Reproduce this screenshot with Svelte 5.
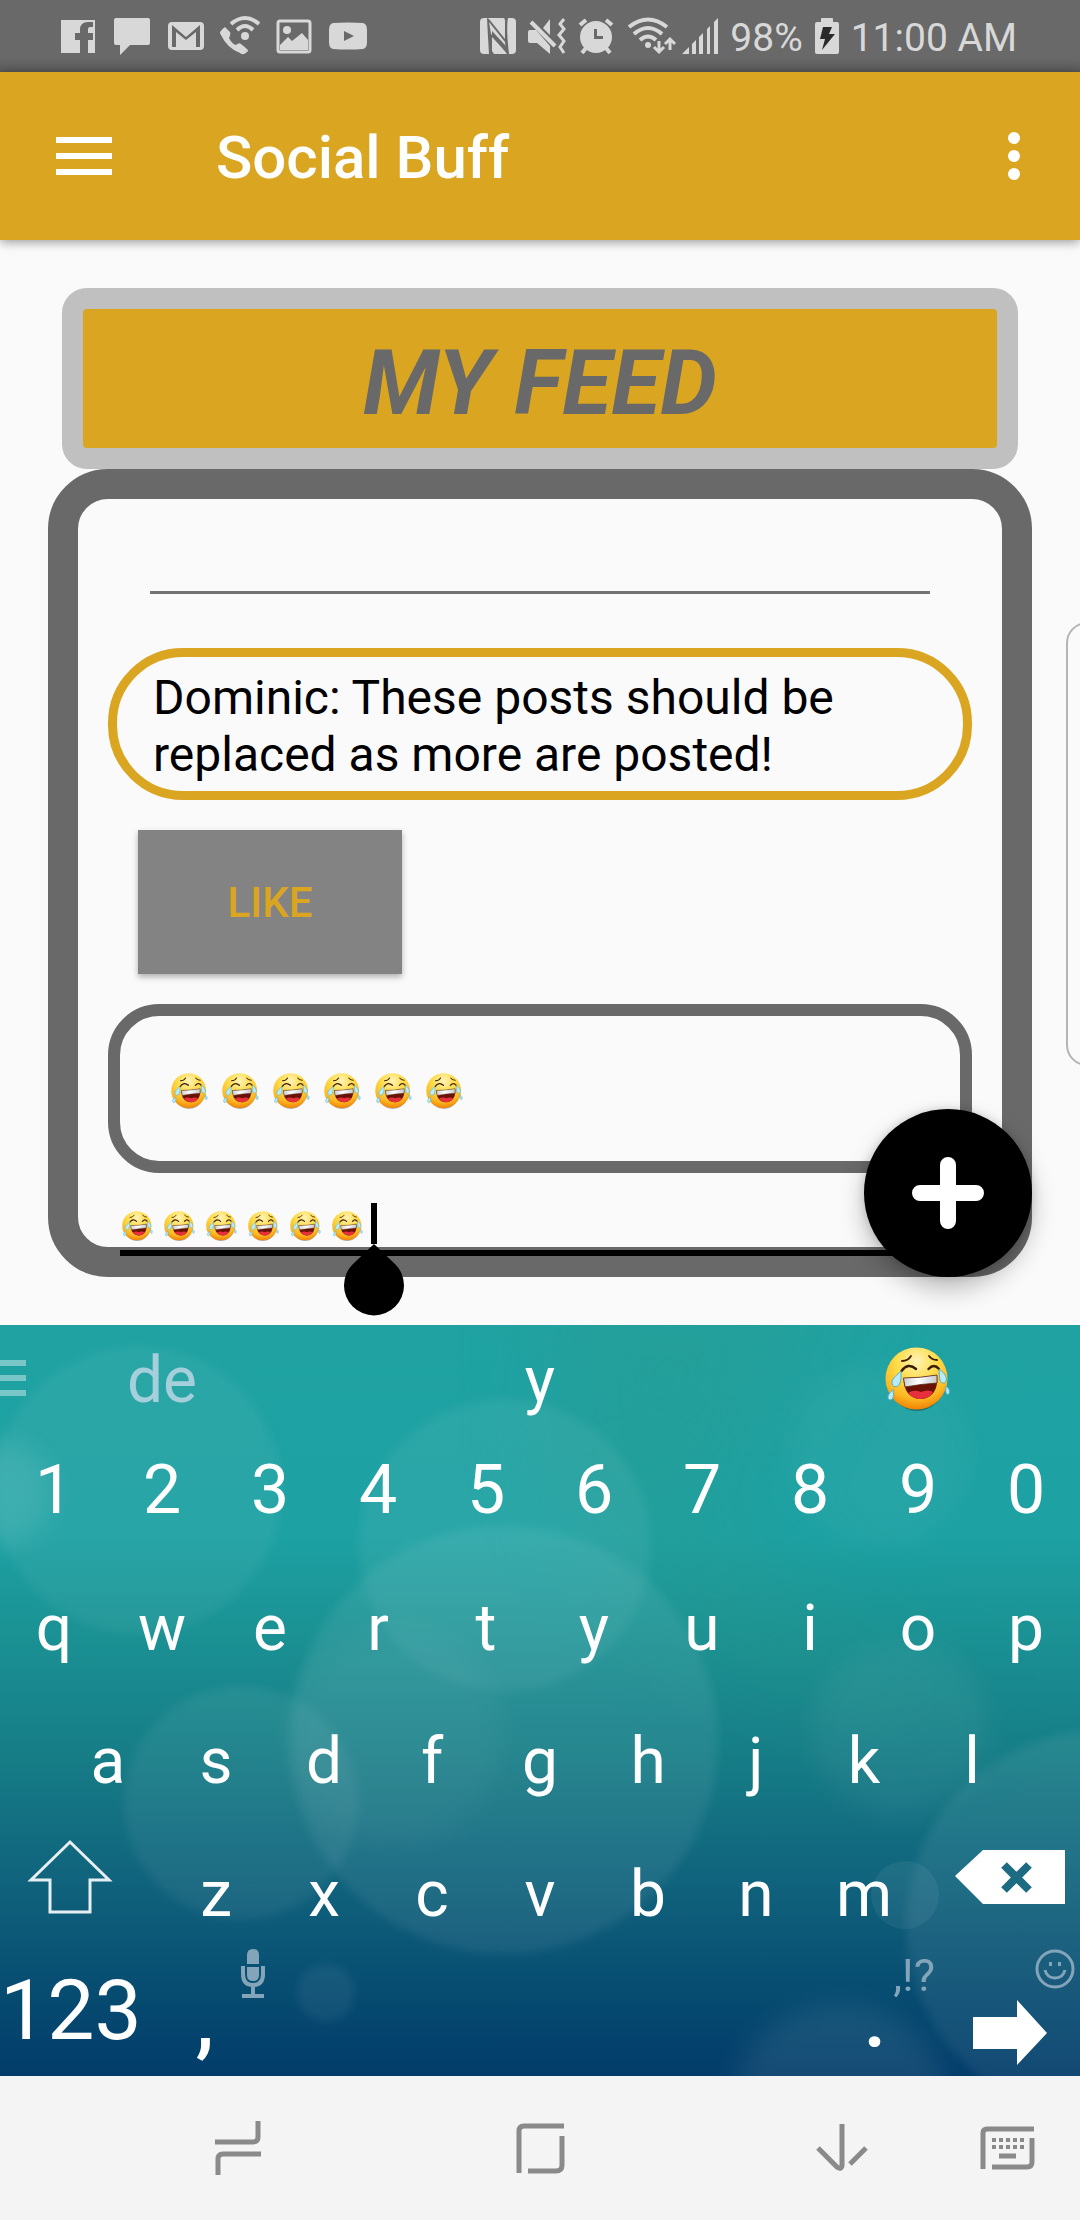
<script>
  const numbers = [...'1234567890'];
  const rowOne = [...'qwertyuiop'];
  const rowTwo = [...'asdfghjkl'];
  const rowThree = [...'zxcvbnm'];
  const six = [1, 2, 3, 4, 5, 6];
</script>

{#snippet joy()}
  <svg class="joy" viewBox="0 0 66 66" role="img" aria-label="face with tears of joy"><use href="#joy-face" /></svg>
{/snippet}

<svg class="defs" width="0" height="0" aria-hidden="true">
  <defs>
    <radialGradient id="skin" cx="0.5" cy="0.22" r="0.8">
      <stop offset="0" stop-color="#fff3b8" />
      <stop offset="0.4" stop-color="#fedc4a" />
      <stop offset="0.75" stop-color="#fcb924" />
      <stop offset="1" stop-color="#f07c00" />
    </radialGradient>
    <linearGradient id="teeth" x1="0" x2="1" y1="0" y2="0">
      <stop offset="0" stop-color="#c9ced4" />
      <stop offset="0.45" stop-color="#ffffff" />
      <stop offset="1" stop-color="#c5cad0" />
    </linearGradient>
    <symbol id="joy-face" viewBox="0 0 66 66">
      <ellipse cx="32" cy="34" rx="28" ry="30" fill="#000" opacity="0.3" />
      <circle cx="31.5" cy="31.5" r="31" fill="url(#skin)" />
      <g fill="none" stroke="#3a1c05" stroke-linecap="round">
        <path d="M17 14Q23 14 26 9M44 9Q47 13 52 13" stroke-width="1.8" />
        <path d="M16.5 24Q23 15 31 22M43.5 22Q49 16 54 22" stroke-width="2.4" />
      </g>
      <path d="M18.5 31Q35 31 52 28C54 43 46 52 36 52C25 52 18.5 44 18.5 31Z" fill="#6b1206" />
      <path d="M23 46Q29 42 36 45Q43 42 48 45Q44 52 36 52Q28 52 23 46Z" fill="#e8303c" />
      <path d="M18.5 31Q35 31 52 28L52 36Q36 37 20 40Z" fill="url(#teeth)" stroke="#5a2a12" stroke-width="0.8" />
      <g fill="#b9ecf8" stroke="#4fb0cc" stroke-width="1">
        <path d="M16 24C16 30 16.5 33 14.5 37C12.5 41 6.5 40.5 7 35C7.5 31 12 28 16 24Z" />
        <path d="M8 42.5C8.5 47 9 49 7.5 51.5C6 54 2.5 53 3 49.5C3.5 46.5 6 45 8 42.5Z" />
        <path d="M54 22C58 25 61 28 61.5 32C61.5 37 56 37.5 55 33C54 29 54.5 26 54 22Z" />
        <path d="M61 39C63.5 41 64.5 42.5 64.5 45C64.5 48 61.5 48 61 45.5C60.5 43 61 41 61 39Z" />
      </g>
    </symbol>
  </defs>
</svg>

<div class="screen">
  <div class="status">
    <div class="notices">
      <svg width="36" height="36" viewBox="0 0 36 36"><path fill-rule="evenodd" d="M1 2H35V35H28V22H33V15H28V11Q28 9 30 9H33V4H28Q20 4 20 12V15H15V22H20V35H1Z" /></svg>
      <svg width="36" height="36" viewBox="0 0 36 36"><path d="M2 0H34Q36 0 36 2V25Q36 27 34 27H16L6 37V27H2Q0 27 0 25V2Q0 0 2 0Z" /></svg>
      <svg width="36" height="36" viewBox="0 0 36 36"><rect x="0" y="4" width="36" height="28" rx="4" /><path class="cut" d="M4 7L18 19L32 7V29H28V14L18 22L8 14V29H4Z" /></svg>
      <svg width="36" height="36" viewBox="0 0 36 36"><path d="M3 9L8 14Q9 16 7 20Q10 26 14 27Q17 24 19 26L25 31Q27 33 25 34Q21 38 18 35Q5 30 -1 17Q-4 14 3 9Z" /><circle cx="23" cy="18" r="4" /><g class="line" stroke-width="4"><path d="M9 6Q23 -6 37 6" /><path d="M15 12Q23 4 31 12" /></g></svg>
      <svg width="36" height="36" viewBox="0 0 36 36"><rect x="2" y="3" width="32" height="31" rx="2" class="line" stroke-width="3" /><circle cx="11" cy="12" r="4" /><path d="M4 27L12 19L16 23L26 15L32 22V32H4Z" /></svg>
      <svg width="36" height="36" viewBox="0 0 36 36"><path d="M3 5Q18 4 33 5Q37 6 37 12V24Q37 30 33 31Q18 32 3 31Q-1 30 -1 24V12Q-1 6 3 5Z" /><path class="cut" d="M14 13V23L24 18Z" /></svg>
    </div>
    <div class="system">
      <svg width="36" height="36" viewBox="0 0 36 36"><rect width="36" height="36" rx="4" /><path class="cut" d="M7 0L9 1L25 21V2L24 0H28Q26 10 29 36H27L12 17V33L14 36H9Q8 20 7 0Z" /><path d="M9 4L25 24L26 34L11 16Z" /><path class="cut" d="M12 13L25 27L28 34L26 34L12 19Z" /></svg>
      <svg width="38" height="36" viewBox="0 0 38 36"><path d="M2 12H8L22 28V36L9 25H2Q0 25 0 23V14Q0 12 2 12ZM15 10L22 1V17Z" /><g class="line" stroke-width="3"><path stroke-width="4" d="M3 4L27 28" /><path d="M36 1L32 6L36 11L31 17L36 23L32 29L36 35" /></g></svg>
      <svg width="36" height="36" viewBox="0 0 36 36"><circle cx="18" cy="19" r="16" /><g class="line" stroke-width="4"><path d="M2 7L8 2M28 2L34 7M8 30L4 35M28 30L32 35" /></g><path class="cut" d="M16 11H19V18H25V21H16Z" /></svg>
      <svg width="44" height="36" viewBox="0 0 44 36"><g class="line" stroke-width="4"><path d="M3 9Q22 -6 41 9" /><path d="M8 16Q22 4 36 16" /><path d="M14 22Q22 15 30 22" /></g><circle cx="22" cy="27" r="3" /><g class="line" stroke-width="3"><path d="M33 23V34M28 29L33 34L38 29M44 32V21M39 26L44 21L49 26" /></g></svg>
      <svg width="36" height="36" viewBox="0 0 36 36"><path d="M0 36L7 29V36ZM10 26L14 22V36H10ZM17 19L21 15V36H17ZM25 11L28 8V36H25ZM32 4L36 0V36H32Z" /></svg>
      <span>98%</span>
      <svg width="24" height="36" viewBox="0 0 24 36"><path d="M2 4H6V1Q6 0 7 0H17Q18 0 18 1V4H22Q24 4 24 6V34Q24 36 22 36H2Q0 36 0 34V6Q0 4 2 4Z" /><path fill="#2a2a2a" d="M8 9H17L14 16H20L7 32L10 21H5Z" /></svg>
      <span>11:00 AM</span>
    </div>
  </div>

  <header>
    <button class="menu" aria-label="Menu"><i></i><i></i><i></i></button>
    <h1>Social Buff</h1>
    <button class="more" aria-label="More options"><i></i><i></i><i></i></button>
  </header>

  <main>
    <h2>MY FEED</h2>
    <section class="feed">
      <input class="blank" aria-label="Filter" />
      <p class="post">Dominic: These posts should be replaced as more are posted!</p>
      <button class="like">LIKE</button>
      <div class="reply">
        {#each six as n (n)}{@render joy()}{/each}
      </div>
      <div class="composer">
        <div class="typed">
          {#each six as n (n)}{@render joy()}{/each}
        </div>
        <span class="caret"><svg class="handle" width="60" height="72" viewBox="0 0 60 72"><path d="M30 0L51 20A30 30 0 1 1 9 20Z" /></svg></span>
        <input aria-label="Write a post" />
      </div>
    </section>
    <div class="edge"></div>
    <button class="fab" aria-label="Add post"><svg width="72" height="72" viewBox="0 0 72 72"><path d="M8 36H64M36 8V64" stroke="#fff" stroke-width="16" stroke-linecap="round" /></svg></button>
  </main>

  <div class="keyboard">
    <svg class="bokeh" viewBox="0 0 1080 751" preserveAspectRatio="none" aria-hidden="true">
      <defs>
        <filter id="soft" x="-20%" y="-20%" width="140%" height="140%"><feGaussianBlur stdDeviation="5" /></filter>
        <filter id="softer" x="-40%" y="-40%" width="180%" height="180%"><feGaussianBlur stdDeviation="14" /></filter>
        <filter id="wash" x="-60%" y="-60%" width="220%" height="220%"><feGaussianBlur stdDeviation="50" /></filter>
      </defs>
      <path d="M560 -60L860 -60L700 200L1000 420L700 330L560 160Z" fill="#2f9a88" opacity="0.3" filter="url(#wash)" />
      <g fill="#fff" filter="url(#soft)">
        <circle cx="138" cy="165" r="144" opacity="0.05" />
        <circle cx="505" cy="220" r="146" opacity="0.06" />
        <circle cx="504" cy="415" r="214" opacity="0.07" />
        <circle cx="241" cy="478" r="117" opacity="0.06" />
        <circle cx="1100" cy="600" r="194" opacity="0.07" />
      </g>
      <g fill="#fff" filter="url(#softer)">
        <circle cx="0" cy="168" r="52" opacity="0.1" />
        <circle cx="395" cy="410" r="108" opacity="0.04" />
        <circle cx="900" cy="405" r="88" opacity="0.05" />
        <circle cx="880" cy="130" r="90" opacity="0.04" />
        <circle cx="840" cy="790" r="112" opacity="0.08" />
      </g>
      <circle cx="905" cy="570" r="34" fill="#fff" opacity="0.06" />
      <circle cx="326" cy="668" r="29" fill="#fff" opacity="0.06" filter="url(#soft)" />
    </svg>

    <div class="suggestions">
      <div class="drawer"><i></i><i></i><i></i></div>
      <button class="dim">de</button>
      <button>y</button>
      <button aria-label="Insert face with tears of joy">{@render joy()}</button>
    </div>
    <div class="keys digits">
      {#each numbers as k (k)}<button>{k}</button>{/each}
    </div>
    <div class="keys">
      {#each rowOne as k (k)}<button>{k}</button>{/each}
    </div>
    <div class="keys home-row">
      {#each rowTwo as k (k)}<button>{k}</button>{/each}
    </div>
    <div class="keys third">
      <button class="side" aria-label="Shift"><svg width="84" height="74" viewBox="0 0 84 74"><path d="M42 2L81 40H62V72H22V40H3Z" fill="none" stroke="#e6eef2" stroke-width="3" /></svg></button>
      <div class="letters">
        {#each rowThree as k (k)}<button>{k}</button>{/each}
      </div>
      <button class="side" aria-label="Backspace"><svg width="110" height="54" viewBox="0 0 110 54"><path d="M0 26L28 0H110V54H28Z" fill="#fff" /><path d="M49 15L74 40M74 15L49 40" stroke="#1d6b82" stroke-width="8" /></svg></button>
    </div>
    <div class="bottom">
      <button class="mode">123</button>
      <button class="punct" aria-label="Comma">
        <svg class="hint" width="24" height="50" viewBox="0 0 24 50"><path fill="#84a5b9" d="M6 15V6Q6 0 12 0Q18 0 18 6V15ZM6 18H18V26Q18 32 12 32Q6 32 6 26Z" /><path d="M2 17V25Q2 36 12 36Q22 36 22 25V17M12 37V46M1 47H23" fill="none" stroke="#84a5b9" stroke-width="4" /></svg>
        <span>,</span>
      </button>
      <button class="space" aria-label="Space"></button>
      <button class="punct"><span class="hint">,!?</span><span>.</span></button>
      <button class="enter" aria-label="Enter">
        <svg class="hint" width="40" height="40" viewBox="0 0 40 40"><g fill="none" stroke="#84a5b9" stroke-width="3"><circle cx="20" cy="20" r="18" /><path d="M10 21Q12 29 20 29Q28 29 30 21" /></g><path fill="#84a5b9" d="M14 13H17V17H14ZM23 13H26V17H23Z" /></svg>
        <svg width="74" height="65" viewBox="0 0 74 65"><path d="M0 17H44V0L74 33L44 65V49H0Z" fill="#fff" /></svg>
      </button>
    </div>
  </div>

  <nav>
    <button aria-label="Recent apps"><svg width="46" height="54" viewBox="0 0 46 54"><path d="M0 21H38Q43 21 43 16V0M46 33H8Q3 33 3 38V54" /></svg></button>
    <button aria-label="Home"><svg width="48" height="50" viewBox="0 0 48 50"><path d="M3 50V8Q3 3 8 3H48M46 13V42Q46 48 40 48H12" /></svg></button>
    <button aria-label="Hide keyboard"><svg width="52" height="48" viewBox="0 0 52 48"><path d="M26 0V42Q25 46 21 43L2 24M50 24L34 40" /></svg></button>
    <button aria-label="Switch keyboard"><svg width="52" height="42" viewBox="0 0 52 42"><path stroke-width="4" d="M2 42V6Q2 2 6 2H53M51 11V35Q51 40 46 40H11" /><path class="dots" d="M11 13H43M11 20H43" /><path stroke-width="3" d="M18 29H35" /></svg></button>
  </nav>
</div>

<style>
  :global(body) {
    background: #fafafa;
  }
  .screen {
    font-family: Roboto, sans-serif;
    overflow: hidden;
  }
  .defs {
    position: absolute;
  }
  button,
  input {
    border: 0;
    padding: 0;
    margin: 0;
    background: none;
    font: inherit;
    color: inherit;
    outline: none;
    min-width: 0;
  }
  svg {
    display: block;
    flex: none;
    overflow: visible;
  }

  .status {
    display: flex;
    justify-content: space-between;
    align-items: center;
    height: 72px;
    padding: 0 63px 0 60px;
    box-sizing: border-box;
    background: linear-gradient(#696969 0, #696969 58px, #5a5a5a 72px);
    color: #d8d8d8;
    font-size: 39px;
    line-height: 46px;
  }
  .status svg {
    fill: #d8d8d8;
  }
  .status span {
    padding-top: 4px;
  }
  .status .cut {
    fill: #696969;
  }
  .status .line {
    fill: none;
    stroke: #d8d8d8;
  }
  .notices {
    display: flex;
    gap: 18px;
  }
  .system {
    display: flex;
    align-items: center;
    gap: 12px;
  }

  header {
    position: relative;
    z-index: 1;
    display: flex;
    align-items: center;
    height: 168px;
    padding: 0 56px;
    box-sizing: border-box;
    background: #daa520;
    color: #fff;
    box-shadow: 0 2px 10px rgba(0, 0, 0, 0.4);
  }
  .menu {
    display: grid;
    gap: 10px;
    width: 56px;
  }
  .menu i {
    height: 6px;
    background: #fff;
  }
  h1 {
    flex: 1;
    margin: 0 0 0 104px;
    padding-top: 4px;
    font-size: 60px;
    line-height: 70px;
    font-weight: 500;
  }
  .more {
    display: grid;
    gap: 6px;
    margin-right: 4px;
  }
  .more i {
    width: 12px;
    height: 12px;
    border-radius: 50%;
    background: #fff;
  }

  main {
    position: relative;
    padding: 48px;
  }
  h2 {
    margin: 0 14px;
    padding: 22px 0 12px;
    border: 21px solid #c0c0c0;
    border-radius: 25px;
    background: #daa520;
    color: #696969;
    text-align: center;
    font-size: 90px;
    line-height: 105px;
    font-style: italic;
    font-weight: 700;
  }
  .feed {
    display: flex;
    flex-direction: column;
    padding: 0 30px;
    border: 30px solid #696969;
    border-radius: 60px;
  }
  .blank {
    height: 92px;
    margin: 0 42px 54px;
    border-bottom: 3px solid #737373;
  }
  .post {
    margin: 0;
    padding: 12px 36px 8px;
    border: 9px solid #daa520;
    border-radius: 75px;
    color: #000;
    font-size: 48px;
    line-height: 57px;
  }
  .like {
    align-self: flex-start;
    width: 264px;
    height: 144px;
    margin: 30px;
    background: #838383;
    color: #daa520;
    font-size: 42px;
    font-weight: 500;
    box-shadow: 0 3px 6px rgba(0, 0, 0, 0.3);
  }
  .reply {
    display: flex;
    gap: 14px;
    padding: 57px 51px 51px;
    border: 12px solid #696969;
    border-radius: 51px;
  }
  .reply .joy {
    width: 37px;
    height: 37px;
  }
  .composer {
    display: flex;
    align-items: flex-end;
    gap: 8px;
    height: 71px;
    margin: 0 12px -9px;
    padding: 0 0 6px 2px;
    border-bottom: 6px solid #000;
  }
  .typed {
    display: flex;
    gap: 11px;
    padding-bottom: 2px;
  }
  .typed .joy {
    width: 31px;
    height: 31px;
  }
  .composer input {
    flex: 1;
    height: 41px;
    font-size: 36px;
  }
  .caret {
    position: relative;
    width: 6px;
    height: 41px;
    background: #000;
  }
  .handle {
    position: absolute;
    top: 41px;
    left: -27px;
  }
  .edge {
    position: absolute;
    top: 382px;
    right: -28px;
    width: 38px;
    height: 440px;
    border: 2px solid #b4b4b4;
    border-radius: 25px;
  }
  .fab {
    position: absolute;
    right: 48px;
    bottom: 48px;
    display: grid;
    place-items: center;
    width: 168px;
    height: 168px;
    border-radius: 50%;
    background: #000;
    box-shadow: 0 12px 24px rgba(0, 0, 0, 0.25), 0 0 10px rgba(0, 0, 0, 0.15);
  }

  .keyboard {
    position: relative;
    background: linear-gradient(#20a2a2 0%, #1da1a3 28%, #1b9395 40%, #167c86 58%, #0f607b 76%, #064a70 90%, #023c6a 100%);
    color: #fff;
    font-size: 64px;
    line-height: 75px;
    overflow: hidden;
  }
  .bokeh {
    position: absolute;
    inset: 0;
    width: 100%;
    height: 100%;
  }
  .suggestions,
  .keys,
  .bottom {
    position: relative;
    display: flex;
  }
  .suggestions {
    height: 76px;
    padding-top: 17px;
  }
  .suggestions button {
    flex: 1;
    display: flex;
    justify-content: center;
    align-items: center;
  }
  .suggestions button:nth-of-type(2) {
    flex: 0 1 432px;
  }
  .suggestions .joy {
    width: 66px;
    height: 66px;
  }
  .suggestions .dim {
    color: #a5cfdb;
  }
  .drawer {
    position: absolute;
    left: 0;
    top: 35px;
    display: grid;
    gap: 9px;
  }
  .drawer i {
    width: 26px;
    height: 6px;
    background: rgba(255, 255, 255, 0.4);
  }
  .keys {
    height: 133px;
  }
  .keys button {
    flex: 1;
  }
  .digits {
    height: 144px;
    font-size: 68px;
  }
  .home-row {
    padding: 0 5%;
  }
  .third {
    justify-content: space-between;
  }
  .letters {
    display: flex;
    width: 70%;
  }
  .keys .side {
    flex: none;
    display: grid;
    place-items: center;
    width: 13%;
    padding-bottom: 36px;
  }
  .bottom {
    display: grid;
    grid-template-columns: 14fr 13fr 54fr 13fr 14fr;
    height: 115px;
    font-size: 84px;
    line-height: 98px;
  }
  .mode {
    padding-bottom: 15px;
  }
  .punct,
  .enter {
    position: relative;
    display: flex;
    justify-content: center;
    align-items: flex-end;
    padding-bottom: 11px;
  }
  .punct {
    padding-bottom: 8px;
    font-weight: 500;
  }
  .bottom .hint {
    position: absolute;
    right: 5px;
    top: -12px;
    color: #84a5b9;
    font-size: 45px;
    line-height: 54px;
    font-weight: 400;
  }

  nav {
    display: grid;
    grid-template-columns: 138fr 200fr 102fr 200fr 102fr 200fr 130fr 8fr;
    height: 144px;
    background: #f4f4f4;
  }
  nav button {
    display: grid;
    place-items: center;
  }
  nav button:nth-child(1) {
    grid-column: 2;
  }
  nav button:nth-child(2) {
    grid-column: 4;
  }
  nav button:nth-child(3) {
    grid-column: 6;
  }
  nav button:nth-child(4) {
    grid-column: 7;
  }
  nav path {
    fill: none;
    stroke: #8a8a8a;
    stroke-width: 5;
  }
  nav .dots {
    stroke-width: 4;
    stroke-dasharray: 4 3;
  }
</style>
